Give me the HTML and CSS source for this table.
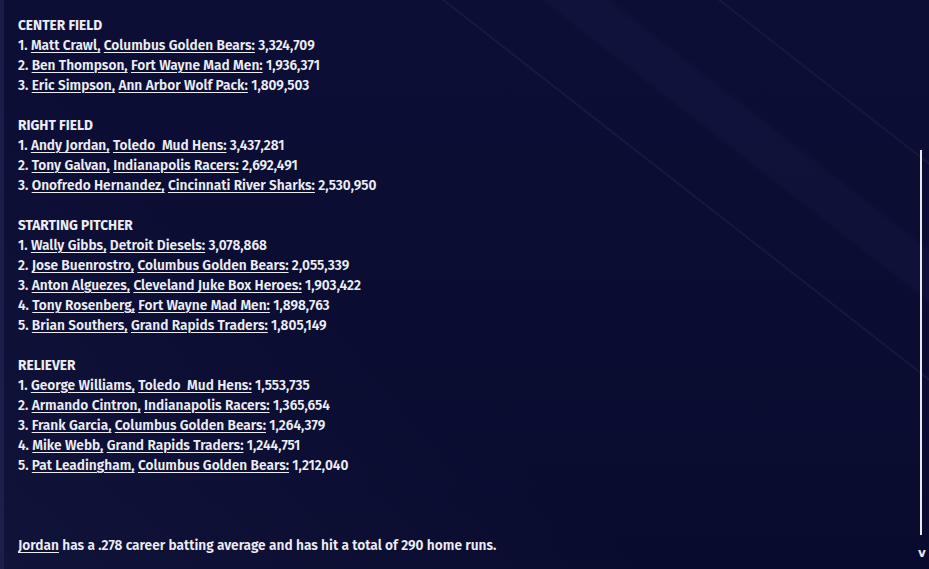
FILE: index.html
```html
<!DOCTYPE html>
<html>
<head>
<meta charset="utf-8">
<link rel="stylesheet" href="styles.css">
</head>
<body>
<div class="page">
  <div class="content">
    <section class="block">
      <div class="title">CENTER FIELD</div>
      <div class="line">1. <a>Matt Crawl,</a> <a>Columbus Golden Bears:</a> 3,324,709</div>
      <div class="line">2. <a>Ben Thompson,</a> <a>Fort Wayne Mad Men:</a> 1,936,371</div>
      <div class="line">3. <a>Eric Simpson,</a> <a>Ann Arbor Wolf Pack:</a> 1,809,503</div>
    </section>
    <section class="block">
      <div class="title">RIGHT FIELD</div>
      <div class="line">1. <a>Andy Jordan,</a> <a>Toledo&nbsp; Mud Hens:</a> 3,437,281</div>
      <div class="line">2. <a>Tony Galvan,</a> <a>Indianapolis Racers:</a> 2,692,491</div>
      <div class="line">3. <a>Onofredo Hernandez,</a> <a>Cincinnati River Sharks:</a> 2,530,950</div>
    </section>
    <section class="block">
      <div class="title">STARTING PITCHER</div>
      <div class="line">1. <a>Wally Gibbs,</a> <a>Detroit Diesels:</a> 3,078,868</div>
      <div class="line">2. <a>Jose Buenrostro,</a> <a>Columbus Golden Bears:</a> 2,055,339</div>
      <div class="line">3. <a>Anton Alguezes,</a> <a>Cleveland Juke Box Heroes:</a> 1,903,422</div>
      <div class="line">4. <a>Tony Rosenberg,</a> <a>Fort Wayne Mad Men:</a> 1,898,763</div>
      <div class="line">5. <a>Brian Southers,</a> <a>Grand Rapids Traders:</a> 1,805,149</div>
    </section>
    <section class="block last">
      <div class="title">RELIEVER</div>
      <div class="line">1. <a>George Williams,</a> <a>Toledo&nbsp; Mud Hens:</a> 1,553,735</div>
      <div class="line">2. <a>Armando Cintron,</a> <a>Indianapolis Racers:</a> 1,365,654</div>
      <div class="line">3. <a>Frank Garcia,</a> <a>Columbus Golden Bears:</a> 1,264,379</div>
      <div class="line">4. <a>Mike Webb,</a> <a>Grand Rapids Traders:</a> 1,244,751</div>
      <div class="line">5. <a>Pat Leadingham,</a> <a>Columbus Golden Bears:</a> 1,212,040</div>
    </section>
    <p class="footer"><a>Jordan</a> has a .278 career batting average and has hit a total of 290 home runs.</p>
  </div>
  <div class="scrollbar">
    <div class="thumb"></div>
    <div class="arrow">v</div>
  </div>
</div>
</body>
</html>
```

FILE: styles.css
```css
html, body {
  margin: 0;
  padding: 0;
  height: 100%;
}
body {
  background-color: #0a0c30;
  background-image:
    linear-gradient(38deg, transparent 720px, rgba(120,130,200,0.12) 721px, transparent 723px),
    linear-gradient(38deg, transparent 780px, rgba(90,100,170,0.05) 785px, rgba(90,100,170,0.05) 820px, transparent 826px),
    linear-gradient(38deg, transparent 890px, rgba(120,130,200,0.10) 891px, transparent 893px),
    linear-gradient(38deg, rgba(40,44,90,0.25), rgba(10,12,48,0) 40%),
    linear-gradient(180deg, #0c0e36 0%, #090b2e 100%);
  color: #ecedf4;
  font-family: "Fira Sans", "Open Sans", "Noto Sans", sans-serif;
  font-size: 13.7px;
  font-weight: 600;
  overflow: hidden;
}
.page {
  position: relative;
  height: 569px;
  border-left: 4px solid rgba(40,44,90,0.5);
  box-sizing: border-box;
}
.content {
  padding: 16px 0 0 14px;
}
.block {
  margin-bottom: 20px;
}
.block.last {
  margin-bottom: 60px;
}
.title, .line, .footer {
  line-height: 20px;
  height: 20px;
  white-space: nowrap;
}
.title {
  font-weight: 700;
}
.footer {
  margin: 0;
}
a {
  color: #ecedf4;
  text-decoration: underline;
  text-decoration-thickness: 1px;
  text-underline-offset: 2px;
}
.scrollbar {
  position: absolute;
  right: 4px;
  top: 146px;
  bottom: 8px;
  width: 6px;
}
.thumb {
  position: absolute;
  left: 1px;
  top: 4px;
  bottom: 26px;
  width: 2px;
  background: #e8e8f0;
}
.arrow {
  position: absolute;
  bottom: 2px;
  left: -1px;
  font-size: 12px;
  line-height: 12px;
  font-weight: 700;
  color: #e8e8f0;
  font-family: "DejaVu Sans", sans-serif;
}
```
